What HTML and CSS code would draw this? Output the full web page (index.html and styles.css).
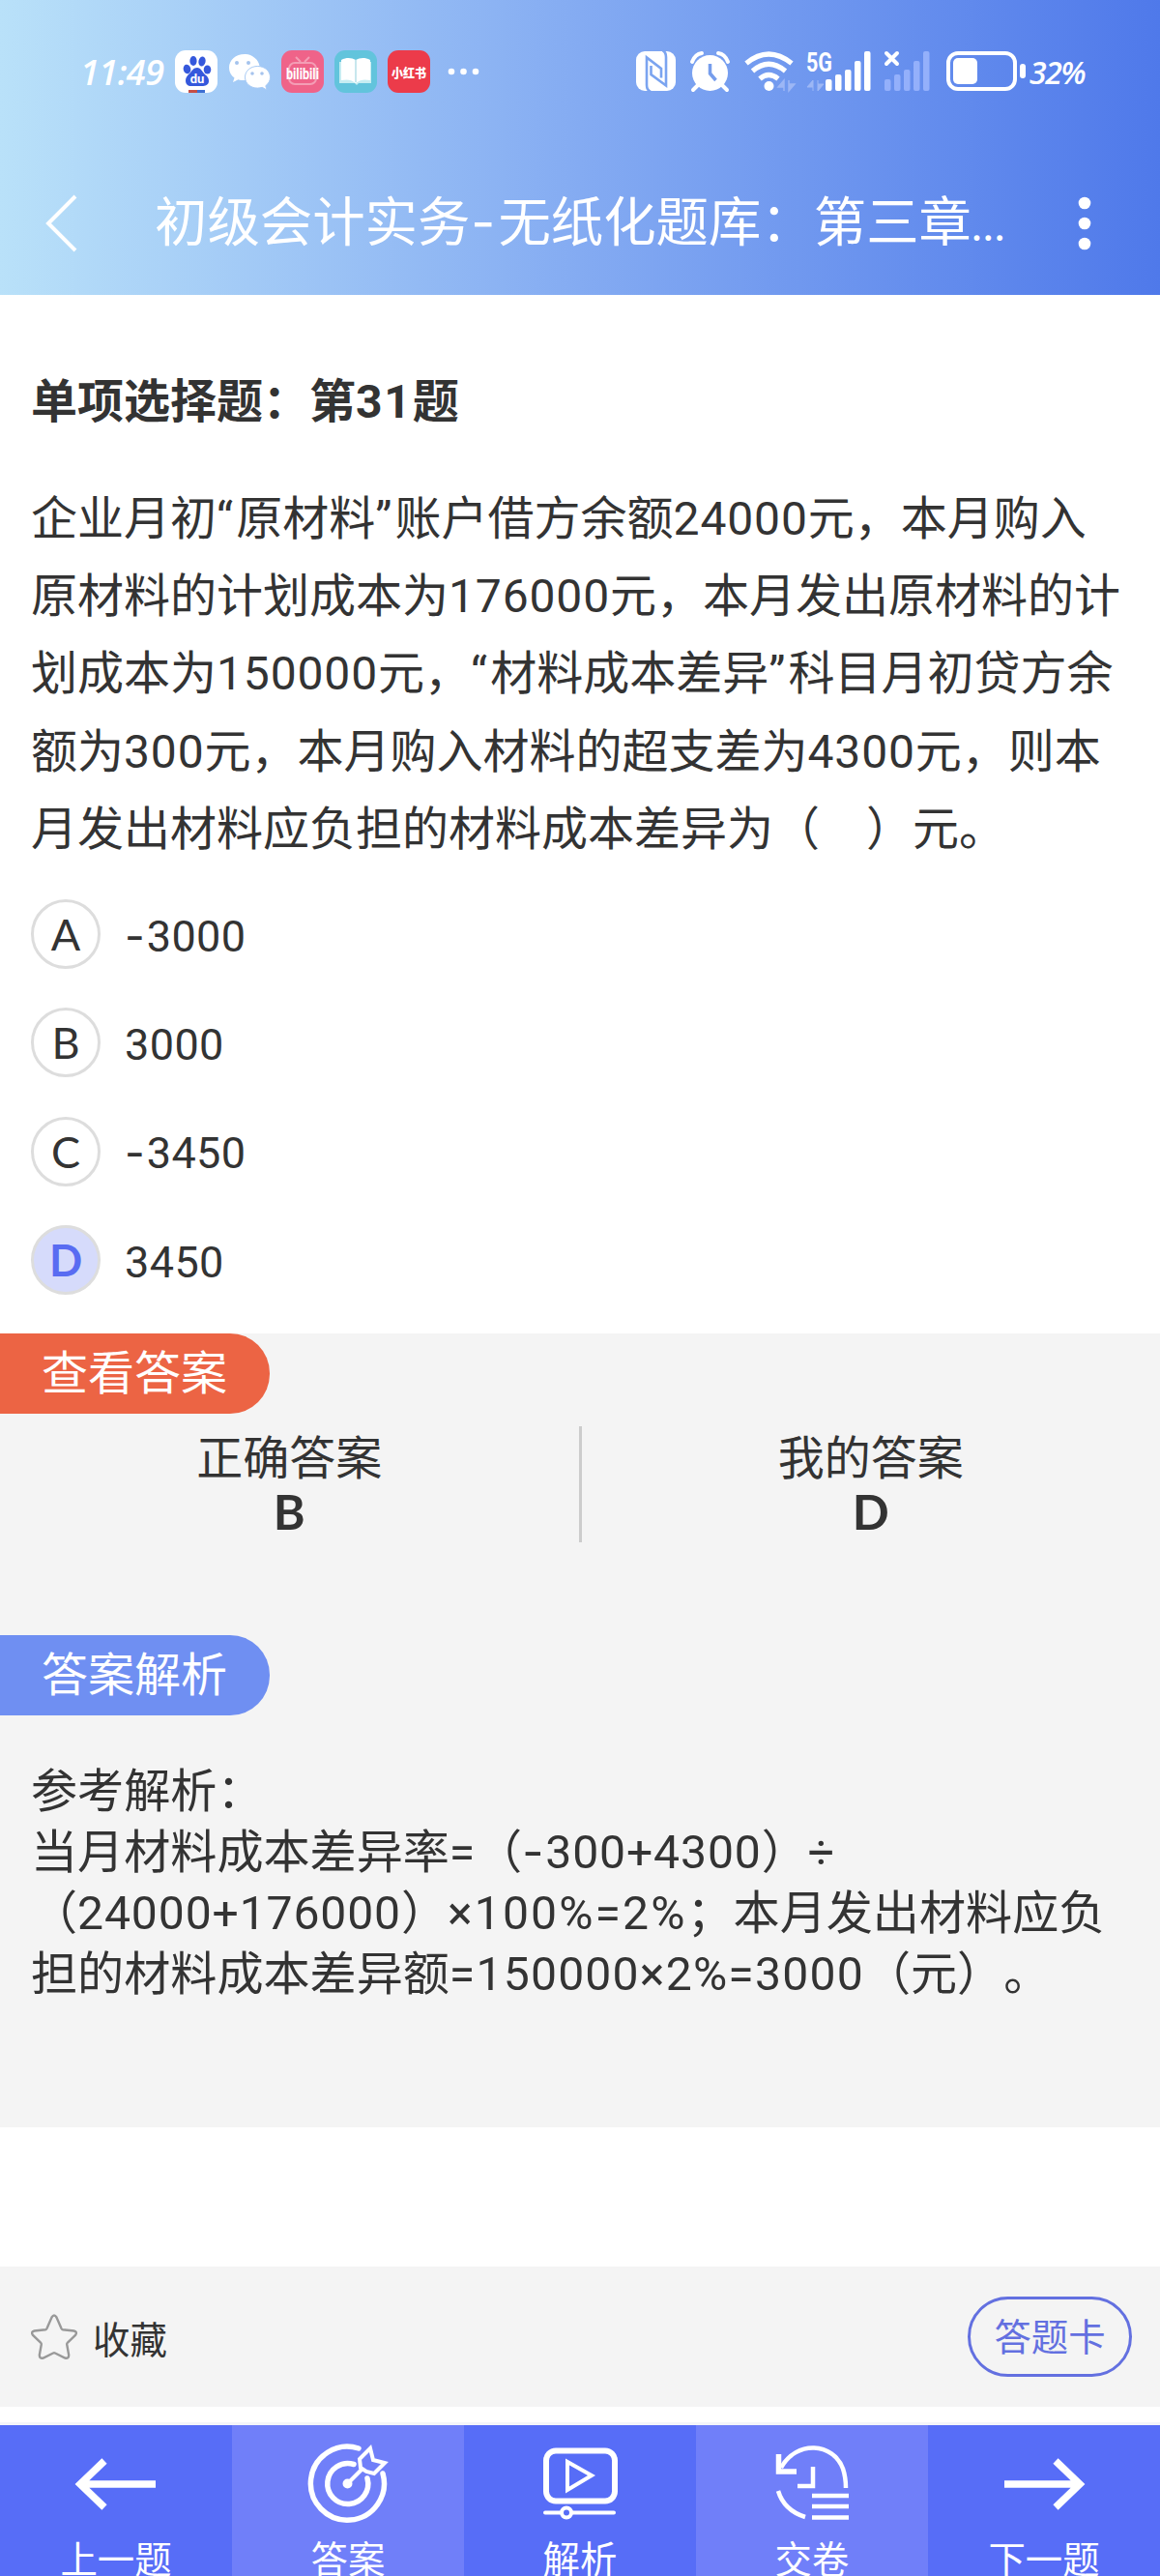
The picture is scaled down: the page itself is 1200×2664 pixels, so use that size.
FILE: index.html
```html
<!DOCTYPE html>
<html lang="zh-CN">
<head>
  <meta charset="UTF-8">
  <title>初级会计实务</title>
  <link rel="stylesheet" href="styles.css">
</head>
<body>
  <header class="header">
    <!-- Status bar -->
    <div class="status">
      <div class="status-left">
        <span class="time">11:49</span>
        <svg class="app" viewBox="0 0 44 44">
          <rect width="44" height="44" rx="11" fill="#fff"/>
          <g fill="#3558dc">
            <ellipse cx="12.500" cy="19.500" rx="3.800" ry="4.800" transform="rotate(-15 12.500 19.500)"/>
            <ellipse cx="19" cy="11" rx="3.600" ry="5"/>
            <ellipse cx="28" cy="11.500" rx="3.600" ry="5" transform="rotate(12 28 11.500)"/>
            <ellipse cx="33.500" cy="20" rx="3.800" ry="4.600"/>
            <path d="M23 18c4 0 5 4 8 7 3 2 4 4 4 7 0 4-4 5-7 5H17c-4 0-6-2-6-6 0-3 2-5 4-7 3-3 4-6 8-6z"/>
          </g>
          <text x="23" y="34" class="du">du</text>
          <rect x="14" y="41" width="9" height="3" fill="#c64e45"/>
          <rect x="23" y="41" width="8" height="3" fill="#3d6ed2"/>
        </svg>
        <svg class="app" viewBox="0 0 44 44">
          <path d="M17 4C8 4 1 10 1 18c0 4.500 2 8 5.500 10.500L5 33l5.500-2.800c2 .6 4 .9 6.500.9l1-.1c-2.500-8 5-15 14.500-15C31 9 24.500 4 17 4z" fill="#fff"/>
          <path d="M30.500 16.500c-7.500 0-13 5-13 11.300s5.500 11.300 13 11.300c1.600 0 3.200-.3 4.700-.8L40 41l-1.200-4.300c3-2.200 4.700-5.200 4.700-8.900 0-6.300-5.500-11.300-13-11.300z" fill="#fff" stroke="#a9cbf5"/>
          <g fill="#a5c3ed"><circle cx="9" cy="13" r="2"/><circle cx="21" cy="13" r="2"/><circle cx="25" cy="24" r="1.800"/><circle cx="35" cy="24" r="1.800"/></g>
        </svg>
        <svg class="app" viewBox="0 0 44 44">
          <rect width="44" height="44" rx="11" fill="#ef6389"/>
          <g fill="none" stroke="#f49db5" stroke-width="2"><rect x="8" y="13" width="28" height="22" rx="6"/><path d="M15 7l5 5M29 7l-5 5"/></g>
          <text x="22" y="30" class="bili" textLength="34" lengthAdjust="spacingAndGlyphs">bilibili</text>
        </svg>
        <svg class="app" viewBox="0 0 44 44">
          <rect width="44" height="44" rx="11" fill="#62c4dc"/>
          <path d="M5 12h33v22H25l-2 2-2-2H5z" fill="#c6edf2"/>
          <path d="M7 10c6-3 11-2 15 0 4-2 9-3 15 0v21c-6-1-10-1-15 3-5-4-9-4-15-3z" fill="#fff"/>
          <path d="M22 10v23" stroke="#b5dfe8" stroke-width="1.500"/>
        </svg>
        <svg class="app" viewBox="0 0 44 44">
          <rect width="44" height="44" rx="11" fill="#ec3b4a"/>
          <text x="22" y="28" class="xhs" textLength="36" lengthAdjust="spacingAndGlyphs">小红书</text>
        </svg>
        <svg class="more" width="34" height="8" viewBox="0 0 34 8" fill="#fff"><circle cx="4" cy="4" r="3.300"/><circle cx="16.500" cy="4" r="3.300"/><circle cx="29" cy="4" r="3.300"/></svg>
      </div>
      <div class="status-right">
        <svg width="42" height="42" viewBox="0 0 42 42">
          <rect width="41" height="41" rx="9" fill="#fff"/>
          <path d="M15 42q-4-2-4-7V6.500L26 18v9.500M27.500-1q3.500 2 3.500 7v29.500L15.500 24v-9" fill="none" stroke="#7ba4f0" stroke-width="2.600"/>
        </svg>
        <svg class="alarm" width="42" height="42" viewBox="0 0 42 42">
          <circle cx="20.500" cy="22.500" r="18.500" fill="#fff"/>
          <path d="M2 11q3-8 10-9M39 11q-3-8-10-9M8 35l-5 5M33 35l5 5" fill="none" stroke="#fff" stroke-width="4" stroke-linecap="round"/>
          <path d="M20.500 13v10l6 7" fill="none" stroke="#769dec" stroke-width="3.500"/>
        </svg>
        <svg class="wifi" width="54" height="42" viewBox="0 0 54 42">
          <g fill="none" stroke="#fff" stroke-width="5.200"><path d="M2 12.500Q25 -6.500 49 12.500"/><path d="M8.500 20.500Q25 6 42.500 20.500"/><path d="M16 28.500Q25 20.500 35 28.500"/></g>
          <circle cx="25.500" cy="36" r="5" fill="#fff"/>
          <path d="M41 41V30l-6 7h6M46 30v11l6-7h-6" fill="#9db7f5" stroke="#9db7f5" stroke-width="1.500"/>
        </svg>
        <svg class="signal" width="68" height="42" viewBox="0 0 68 42">
          <text x="0" y="20.500" class="net" textLength="27" lengthAdjust="spacingAndGlyphs">5G</text>
          <path d="M7 41V30l-6 7h6M12 30v11l6-7h-6" fill="#9db7f5" stroke="#9db7f5"/>
          <g fill="#fff"><rect x="20" y="29" width="6.500" height="12" rx="2"/><rect x="30" y="24" width="6.500" height="17" rx="2"/><rect x="40" y="19" width="6.500" height="22" rx="2"/><rect x="50" y="10" width="6.500" height="31" rx="2"/><rect x="60" y="0" width="6.500" height="41" rx="2"/></g>
        </svg>
        <svg class="signal2" width="50" height="42" viewBox="0 0 50 42">
          <path d="M3 2l11 11M14 2L3 13" stroke="#fff" stroke-width="4" stroke-linecap="round"/>
          <g fill="#94b0fb"><rect x="1" y="29" width="6.500" height="12" rx="2"/><rect x="11" y="24" width="6.500" height="17" rx="2"/><rect x="21" y="19" width="6.500" height="22" rx="2"/><rect x="31" y="10" width="6.500" height="31" rx="2"/><rect x="41" y="0" width="6.500" height="41" rx="2"/></g>
        </svg>
        <svg class="battery" width="83" height="42" viewBox="0 0 83 42">
          <rect x="2" y="2" width="69" height="37" rx="10" fill="none" stroke="#fff" stroke-width="4"/>
          <rect x="7" y="7" width="25" height="27" rx="5" fill="#fff"/>
          <rect x="76" y="13" width="6" height="15" rx="3" fill="#fff"/>
        </svg>
        <span class="percent">32%</span>
      </div>
    </div>

    <!-- Title bar -->
    <div class="titlebar">
      <svg class="back" width="34" height="60" viewBox="0 0 34 60"><path d="M31 2L3 30l28 28" fill="none" stroke="#fff" stroke-width="4"/></svg>
      <div class="title">初级会计实务<span class="dash">-</span>无纸化题库：第三章<span class="dots">…</span></div>
      <svg class="menu" width="14" height="56" viewBox="0 0 14 56" fill="#fff"><circle cx="7" cy="7" r="6.300"/><circle cx="7" cy="28" r="6.300"/><circle cx="7" cy="49" r="6.300"/></svg>
    </div>
  </header>

  <!-- Question -->
  <main class="question">
    <h2>单项选择题：第<span class="num">31</span>题</h2>
    <p class="stem">企业月初<span class="quote">“</span>原材料<span class="quote">”</span>账户借方余额<span class="num">24000</span>元，本月购入<br>
      原材料的计划成本为<span class="num">176000</span>元，本月发出原材料的计<br>
      划成本为<span class="num">150000</span>元，<span class="quote">“</span>材料成本差异<span class="quote">”</span>科目月初贷方余<br>
      额为<span class="num">300</span>元，本月购入材料的超支差为<span class="num">4300</span>元，则本<br>
      月发出材料应负担的材料成本差异为（　）元。</p>
    <ul class="options">
      <li><span class="letter">A</span><span class="option-text"><span class="minus">-</span>3000</span></li>
      <li><span class="letter">B</span><span class="option-text">3000</span></li>
      <li><span class="letter">C</span><span class="option-text"><span class="minus">-</span>3450</span></li>
      <li><span class="letter selected">D</span><span class="option-text">3450</span></li>
    </ul>
  </main>

  <!-- Answer and analysis -->
  <section class="answer">
    <div class="tag tag-answer">查看答案</div>
    <div class="compare">
      <div class="compare-item">正确答案<b>B</b></div>
      <div class="compare-item">我的答案<b>D</b></div>
    </div>
    <div class="tag tag-analysis">答案解析</div>
    <p class="analysis">参考解析：<br>
      当月材料成本差异率<span class="num">=</span>（<span class="minus">-</span><span class="num">300+4300</span>）<span class="num">÷</span><br>
      （<span class="num">24000+176000</span>）<span class="num wide">×100%=2%</span>；本月发出材料应负<br>
      担的材料成本差异额<span class="num result">=150000×2%=3000</span>（元）。</p>
  </section>

  <div class="tools">
    <div class="favorite">
      <svg width="48" height="48" viewBox="0 0 48 48"><path d="M21.500 3.500q2.500-4 5 0l5 11.500q.5 1 1.500 1.200l11.500 1.300q4 1 1.500 4.500l-8 7.500q-1 1-.8 2l2 11q0 4-4 3L25 40.500q-1-.5-2 0L12.800 45.500q-4 1-4-3l2-11q.2-1-.8-2L2 22q-2.500-3.500 1.500-4.500L15 16.200q1-.2 1.500-1.200z" fill="none" stroke="#999" stroke-width="2.400"/></svg>
      <span>收藏</span>
    </div>
    <button class="card-btn">答题卡</button>
  </div>

  <!-- Bottom navigation -->
  <nav class="nav">
    <div class="nav-item">
      <svg width="84" height="84" viewBox="0 0 84 84"><path d="M83 42H4M30 18L5 42l25 24" fill="none" stroke="#fff" stroke-width="7.500"/></svg>
      <span>上一题</span>
    </div>
    <div class="nav-item light">
      <svg width="84" height="84" viewBox="0 0 84 84" fill="none" stroke="#fff" stroke-width="5.500" stroke-linecap="round">
        <path d="M53 5A38 38 0 1 0 78 31"/>
        <path d="M48 21.500A21 21 0 1 0 62 36"/>
        <path d="M42 41l16-16M55 25l-1-9L65 5l3 12 12 3-11 11-8-2z" stroke-width="4" stroke-linecap="butt"/>
        <circle cx="41.500" cy="41.500" r="4" fill="#fff" stroke-width="2"/>
      </svg>
      <span>答案</span>
    </div>
    <div class="nav-item">
      <svg width="84" height="84" viewBox="0 0 84 84" fill="none" stroke="#fff" stroke-width="4">
        <rect x="7" y="7.500" width="71" height="52" rx="10" stroke-width="6"/>
        <path d="M29 19v29l25-15z"/>
        <path d="M6 71.500h15M33 71.500h44" stroke-linecap="round"/><circle cx="28" cy="71.500" r="5"/>
      </svg>
      <span>解析</span>
    </div>
    <div class="nav-item light">
      <svg width="84" height="84" viewBox="0 0 84 84" fill="none" stroke="#fff" stroke-width="4.500">
        <path d="M10 25C26-4 64-1 74 26q3 9 3 20M7 49q6 20 28 27M43 24v20H27M42 54h38M42 65h38M42 76.500h38"/>
        <path d="M7.500 11v18H26" stroke-width="5.500"/>
      </svg>
      <span>交卷</span>
    </div>
    <div class="nav-item">
      <svg width="84" height="84" viewBox="0 0 84 84"><path d="M1 42h79M54 18l25 24-25 24" fill="none" stroke="#fff" stroke-width="7.500"/></svg>
      <span>下一题</span>
    </div>
  </nav>
</body>
</html>
```
FILE: styles.css
```css
* {
  box-sizing: border-box;
}

body {
  margin: 0;
  width: 1200px;
  height: 2664px;
  overflow: hidden;
  background: #fff;
  color: #333;
  font-family: Roboto, "Noto Sans CJK SC", sans-serif;
  font-size: 48px;
  white-space: nowrap;
  text-spacing-trim: space-all;
}

h2, p, ul {
  margin: 0;
  padding: 0;
}

svg {
  display: block;
  flex-shrink: 0;
  overflow: visible;
}

.num {
  letter-spacing: 0.85px;
}

.num.wide {
  letter-spacing: 2.1px;
}

.num.result {
  letter-spacing: 1.2px;
}

.quote {
  letter-spacing: 3.2px;
}

.minus {
  font-family: Inter, sans-serif;
  letter-spacing: 2px;
  line-height: 1;
}

/* Header */
.header {
  height: 305px;
  background: linear-gradient(90deg, #b9e1f9, #84abf2 50%, #4f79ea);
  color: #fff;
}

.status {
  display: flex;
  justify-content: space-between;
  height: 148px;
  padding: 0 74px 0 83px;
}

.status-left, .status-right {
  display: flex;
  align-items: center;
}

.time {
  width: 98px;
  font-family: "Open Sans", sans-serif;
  font-size: 36px;
  font-style: italic;
  font-weight: 600;
  letter-spacing: -0.5px;
}

.app {
  width: 44px;
  height: 44px;
  margin-right: 11px;
}

.more {
  margin-left: 7px;
}

.du, .bili, .xhs, .net {
  fill: #fff;
  font-weight: bold;
}

.du {
  font-size: 13px;
  text-anchor: middle;
}

.bili {
  font-size: 16px;
  text-anchor: middle;
}

.xhs {
  font-family: "Noto Sans CJK SC", sans-serif;
  font-size: 13px;
  font-weight: 900;
  text-anchor: middle;
}

.net {
  font-size: 27px;
}

.alarm {
  margin-left: 14px;
}

.wifi {
  margin-left: 14px;
}

.signal {
  margin-left: 10px;
}

.signal2 {
  margin-left: 12px;
}

.battery {
  margin-left: 15px;
}

.percent {
  width: 61px;
  margin-left: 3px;
  font-family: "Open Sans", sans-serif;
  font-size: 32px;
  font-style: italic;
  font-weight: 600;
  letter-spacing: -1.5px;
}

.titlebar {
  display: flex;
  align-items: center;
  height: 157px;
  padding: 9px 71px 0 47px;
}

.title {
  flex: 1;
  margin-left: 79px;
  font-size: 54.400px;
  line-height: 70px;
}

.dash {
  margin-left: 1px;
  font-family: Inter, sans-serif;
  letter-spacing: 3px;
  line-height: 1;
}

.dots {
  font-family: Lato, sans-serif;
  font-size: 46px;
  line-height: 1;
}

/* Question */
.question {
  height: 1074px;
  padding: 76px 0 0 32px;
}

h2 {
  font-size: 48px;
  line-height: 70px;
}

h2 .num {
  letter-spacing: 1.8px;
}

.stem {
  margin-top: 46px;
  font-size: 48px;
  line-height: 80.2px;
}

.options {
  margin-top: 32px;
  list-style: none;
}

.options li {
  display: flex;
  align-items: center;
  height: 72px;
  margin-bottom: 40.4px;
  gap: 25px;
  font-size: 45px;
}

.option-text {
  padding-top: 4px;
  letter-spacing: 0.4px;
}

.letter {
  display: flex;
  align-items: center;
  justify-content: center;
  width: 72px;
  height: 72px;
  border: 3px solid #ddd;
  border-radius: 50%;
  font-family: Lato, sans-serif;
}

.letter.selected {
  background: #d6dbfb;
  color: #596cf2;
  font-weight: bold;
}

/* Answer panel */
.answer {
  height: 821px;
  background: #f4f4f4;
}

.tag {
  width: 279px;
  height: 83px;
  padding-left: 43px;
  border-radius: 0 41px 41px 0;
  color: #fff;
  line-height: 83px;
}

.tag-answer {
  background: #ec6444;
}

.tag-analysis {
  margin-top: 96px;
  background: #6f8ff2;
}

.compare {
  display: flex;
  height: 120px;
  margin-top: 13px;
}

.compare-item {
  flex: 1;
  padding-top: 6px;
  line-height: 55px;
  text-align: center;
}

.compare-item:first-child {
  border-right: 3px solid #ccc;
}

.compare b {
  display: block;
  font-family: Lato, sans-serif;
  font-size: 50px;
}

.analysis {
  padding: 47px 0 0 32px;
  font-size: 48.100px;
  line-height: 63px;
}

/* Favorite and answer card */
.tools {
  display: flex;
  align-items: center;
  justify-content: space-between;
  height: 145px;
  margin-top: 144px;
  padding: 0 29px 0 32px;
  background: #f4f4f4;
}

.favorite {
  display: flex;
  align-items: center;
  gap: 16px;
  font-size: 38.400px;
}

.favorite span {
  padding-top: 1px;
}

.card-btn {
  width: 170px;
  height: 83px;
  padding: 0 0 6px;
  border: 3px solid #6370e0;
  border-radius: 42px;
  background: none;
  color: #6370e0;
  font-family: inherit;
  font-size: 38.400px;
}

/* Bottom navigation */
.nav {
  display: grid;
  grid-template-columns: repeat(5, 1fr);
  height: 159px;
  margin-top: 16px;
  border-top: 3px solid #f3f4f9;
}

.nav-item {
  display: flex;
  flex-direction: column;
  align-items: center;
  padding-top: 19px;
  background: #576df7;
  color: #fff;
  font-size: 38.400px;
  line-height: 73px;
}

.nav-item.light {
  background: #707ff9;
}
```
